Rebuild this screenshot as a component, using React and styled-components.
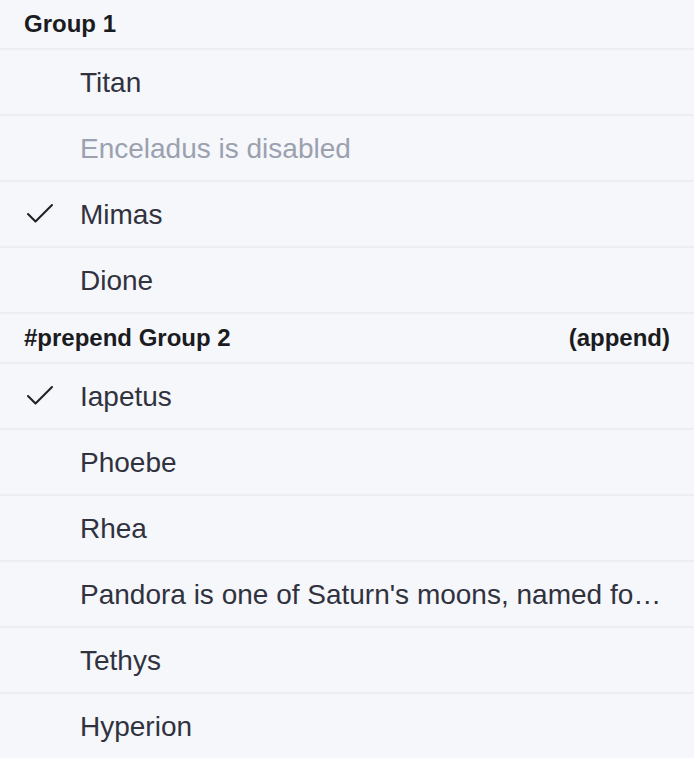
import React from "react";
import styled, { createGlobalStyle } from "styled-components";

const GlobalStyle = createGlobalStyle`
  html, body {
    margin: 0;
    padding: 0;
    background: #f6f7fb;
  }
  body {
    font-family: "Liberation Sans", Arial, sans-serif;
  }
`;

const groups = [
  {
    id: 1,
    title: "Group 1",
    items: [
      { id: "titan", label: "Titan" },
      { id: "enceladus", label: "Enceladus is disabled", disabled: true },
      { id: "mimas", label: "Mimas", selected: true },
      { id: "dione", label: "Dione" },
    ],
  },
  {
    id: 2,
    title: "#prepend Group 2",
    append: "(append)",
    items: [
      { id: "iapetus", label: "Iapetus", selected: true },
      { id: "phoebe", label: "Phoebe" },
      { id: "rhea", label: "Rhea" },
      {
        id: "pandora",
        label:
          "Pandora is one of Saturn's moons, named for a Titaness of Greek mythology",
      },
      { id: "tethys", label: "Tethys" },
      { id: "hyperion", label: "Hyperion" },
    ],
  },
];

const CheckIcon = () => (
  <CheckSvg width="36" height="36" viewBox="0 0 24 24" fill="none">
    <path
      d="M20 6 9 17l-5-5"
      stroke="#1f2129"
      strokeWidth="1.4"
      strokeLinecap="round"
      strokeLinejoin="round"
    />
  </CheckSvg>
);

const App = () => {
  return (
    <>
      <GlobalStyle />
      <List>
        {groups.map((group) => (
          <Group key={group.id}>
            <GroupHeader>
              <span>{group.title}</span>
              {group.append && <span>{group.append}</span>}
            </GroupHeader>
            {group.items.map((item) => (
              <Option key={item.id} $disabled={item.disabled}>
                <IconSlot>{item.selected && <CheckIcon />}</IconSlot>
                <Label>{item.label}</Label>
              </Option>
            ))}
          </Group>
        ))}
      </List>
    </>
  );
};

export default App;

const List = styled.div`
  display: flex;
  flex-direction: column;
  background: #f6f7fb;
  min-height: 100vh;
`;

const Group = styled.div`
  display: flex;
  flex-direction: column;
`;

const GroupHeader = styled.div`
  display: flex;
  justify-content: space-between;
  align-items: center;
  box-sizing: border-box;
  height: 50px;
  padding: 0 24px;
  font-size: 24px;
  font-weight: bold;
  color: #1b1c21;
  border-bottom: 2px solid #eceef3;
`;

const Option = styled.div`
  display: flex;
  align-items: center;
  gap: 24px;
  box-sizing: border-box;
  height: 66px;
  padding: 2px 24px 0;
  font-size: 28px;
  color: ${(p) => (p.$disabled ? "#9ba1af" : "#30323e")};
  border-bottom: 2px solid #eceef3;
`;

const IconSlot = styled.div`
  flex: 0 0 32px;
  width: 32px;
  min-width: 0;
  height: 32px;
  display: flex;
  justify-content: center;
  align-items: center;
  margin-top: -2px;
`;

const CheckSvg = styled.svg`
  flex-shrink: 0;
`;

const Label = styled.div`
  flex: 1;
  min-width: 0;
  white-space: nowrap;
  overflow: hidden;
  text-overflow: ellipsis;
`;
